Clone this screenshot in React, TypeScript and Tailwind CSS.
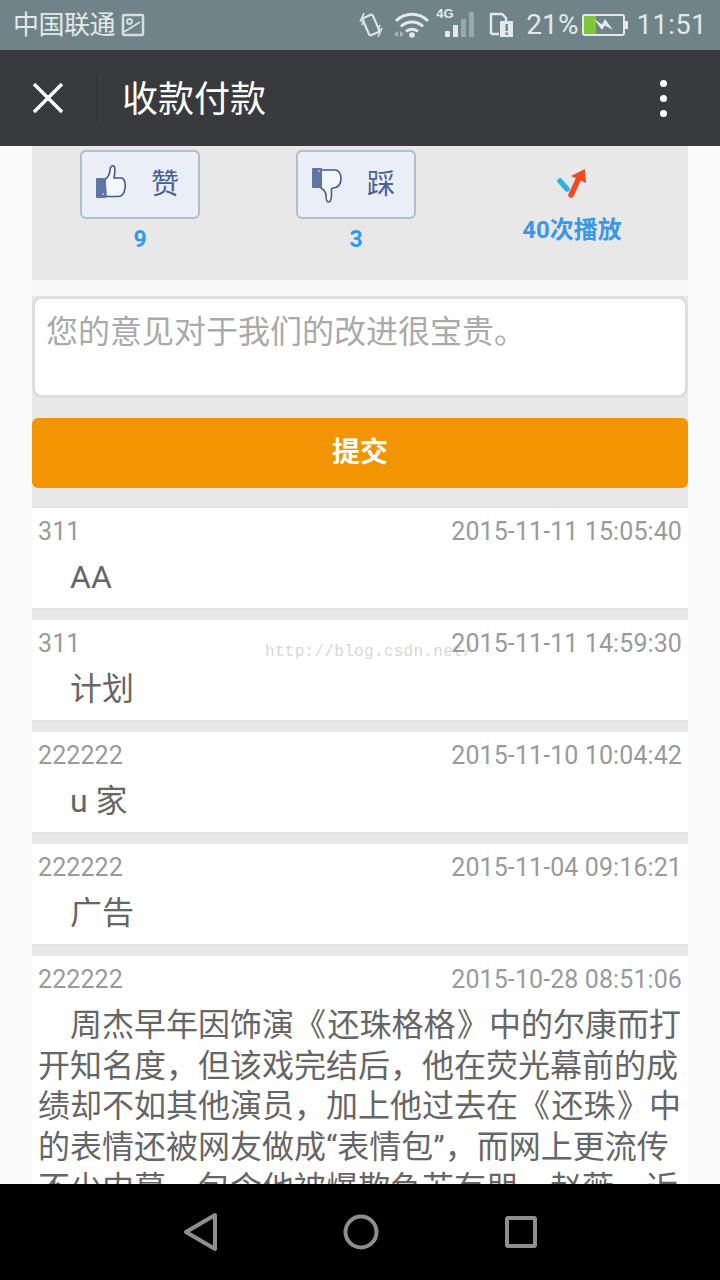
import React from "react";

const FONT = "font-['Roboto','Noto_Sans_CJK_SC',sans-serif]";

function StatusBar() {
  return (
    <div className="h-[50px] shrink-0 bg-[#6f8389] flex items-center pl-[13px] pr-[13px] text-[#e3e9ea]">
      <span className="text-[26px] leading-none tracking-[-0.5px]">中国联通</span>
      <svg width="24" height="24" viewBox="0 0 24 24" className="ml-[6px]" fill="none" stroke="#d6dfe0" strokeWidth="2.5">
        <rect x="2" y="2" width="20" height="20" rx="1" />
        <circle cx="8.500" cy="8.500" r="2.400" strokeWidth="2" />
        <path d="M3 19 L19 9" strokeWidth="2" />
      </svg>
      <div className="flex-1" />
      <svg width="24" height="26" viewBox="0 0 24 26" fill="none" stroke="#dfe6e7" strokeWidth="2.200" className="mr-[11px]">
        <rect x="6.500" y="3.500" width="11" height="19" rx="2" transform="rotate(-24 12 13)" />
        <path d="M1 10 L5 1 M3 13 L5 8 M23 16 L19 25 M21 13 L19 18" strokeWidth="1.600" />
      </svg>
      <svg width="36" height="28" viewBox="0 0 36 28" fill="none" stroke="#e3e9ea" strokeWidth="3" className="mr-[6px]">
        <path d="M2 10 C11 1 25 1 34 10" />
        <path d="M7 15.500 C13 9.500 23 9.500 29 15.500" />
        <path d="M12 20.500 C15 17.500 21 17.500 24 20.500" />
        <circle cx="18" cy="24" r="2.800" fill="#e3e9ea" stroke="none" />
        <path d="M0 23 l4 -3 v6 z M6 20 l4 3 l-4 3 z" fill="#a9b8bb" stroke="none" />
      </svg>
      <div className="relative w-[39px] h-[30px] mr-[14px]">
        <span className="absolute left-0 top-[-3px] text-[13px] font-bold leading-none font-['Liberation_Sans',sans-serif]">4G</span>
        <div className="absolute left-[9px] bottom-[3px] flex items-end gap-[3px]">
          <div className="w-[5px] h-[6px] bg-[#e3e9ea] rounded-[1px]" />
          <div className="w-[5px] h-[12px] bg-[#e3e9ea]" />
          <div className="w-[5px] h-[18px] bg-[#98a9ad]" />
          <div className="w-[5px] h-[25px] bg-[#98a9ad]" />
        </div>
      </div>
      <svg width="24" height="26" viewBox="0 0 24 26" fill="none" className="mr-[13px]">
        <path d="M2 22 V2 H13 L17 6 V9 M2 22 H10" stroke="#e3e9ea" strokeWidth="2.400" />
        <rect x="11" y="9" width="13" height="16" fill="#e3e9ea" />
        <rect x="16.500" y="12" width="2.400" height="7" fill="#6f8389" />
        <rect x="16.500" y="20.500" width="2.400" height="2.400" fill="#6f8389" />
      </svg>
      <span className="text-[28px] leading-none tracking-[0.2px] mr-[3px]">21%</span>
      <svg width="46" height="22" viewBox="0 0 46 22" fill="none" className="mr-[9px]">
        <rect x="1" y="1" width="41" height="20" rx="2" stroke="#e3e9ea" strokeWidth="2" />
        <rect x="2" y="2" width="12" height="18" fill="#80c43c" />
        <rect x="43" y="7" width="3" height="8" fill="#e3e9ea" />
        <path d="M12 5 L20 10.500 L23 5 L31 16 L23 11.500 L20 16 Z" fill="#e3e9ea" />
      </svg>
      <span className="text-[27px] leading-none tracking-[0.6px]">11:51</span>
    </div>
  );
}

function Header() {
  return (
    <div className="h-[96px] shrink-0 bg-[#393a3e] flex items-center text-white">
      <div className="w-[97px] h-[48px] flex items-center border-r border-[#2f3033]">
        <svg width="32" height="32" viewBox="0 0 32 32" className="ml-[32px]" stroke="#fff" strokeWidth="3.400" fill="none">
          <path d="M2 2 L30 30 M30 2 L2 30" />
        </svg>
      </div>
      <span className="ml-[25px] mt-[3px] text-[36px] leading-none">收款付款</span>
      <div className="flex-1" />
      <div className="flex flex-col gap-[8px] mr-[53px]">
        <div className="w-[7px] h-[7px] rounded-full bg-white" />
        <div className="w-[7px] h-[7px] rounded-full bg-white" />
        <div className="w-[7px] h-[7px] rounded-full bg-white" />
      </div>
    </div>
  );
}

function Vote({ label, count, down }: { label: string; count: string; down?: boolean }) {
  return (
    <div className="flex flex-col items-center">
      <div className="w-[120px] h-[69px] mt-[4px] rounded-[6px] border-[2px] border-[#b0bccf] bg-[#e9eef7] flex items-center pl-[14px] text-[#4a5f96]">
        {down ? (
          <svg width="30" height="36" viewBox="0 0 30 36" fill="none" className="mt-[3px]">
            <path d="M9 2 H24 C28 3 29 7 29 11 C29 16 26 20 21 20 C19 20 19.500 22 19.500 26 C19.500 30 19 34 16.500 34 C14 34 14 30 14 27 C14 24 11 21 9 20 Z" fill="#f4f7fb" stroke="#44598f" strokeWidth="1.600" />
            <rect x="0" y="0" width="10" height="20" rx="1" fill="#5f75a5" />
            <circle cx="7" cy="3" r="0.800" fill="#fff" />
          </svg>
        ) : (
          <svg width="30" height="36" viewBox="0 0 30 36" fill="none" className="mb-[3px]">
            <path d="M9 15 C12 12 14 9 14 5 C14 1 17 -0.500 18.500 2 C19.500 6 18.500 10 18 13 H25 C29 13 29.500 19 29 23 C28.500 28 26 31.500 22 31.500 H10 Z" fill="#f4f7fb" stroke="#44598f" strokeWidth="1.600" />
            <rect x="0" y="13" width="10" height="20" rx="1" fill="#5f75a5" />
            <circle cx="7" cy="29" r="0.800" fill="#fff" />
          </svg>
        )}
        <span className="ml-[25px] text-[28px] leading-none">{label}</span>
      </div>
      <div className="mt-[8px] text-[23px] leading-[26px] font-bold text-[#2f9bf0]">{count}</div>
    </div>
  );
}

function Stats() {
  return (
    <div className="h-[134px] bg-[#e8e8e8] grid grid-cols-[216px_216px_216px] justify-items-center">
      <Vote label="赞" count="9" />
      <Vote label="踩" count="3" down />
      <div className="flex flex-col items-center">
        <svg width="30" height="32" viewBox="0 0 30 32" className="mt-[22px]" fill="none">
          <path d="M3 13 L10 21" stroke="#2db2dc" strokeWidth="5.500" strokeLinecap="round" />
          <path d="M14 27 L22 10" stroke="#ee4b25" strokeWidth="5.500" strokeLinecap="round" />
          <path d="M14 8 L28 1 L29 15 Z" fill="#ee4b25" />
        </svg>
        <div className="mt-[15px] text-[24px] leading-[30px] font-bold text-[#3b97e8]">40次播放</div>
      </div>
    </div>
  );
}

function Entry({ name, time, mark, children }: { name: string; time: string; mark?: string; children: React.ReactNode }) {
  return (
    <div className="relative bg-white">
      {mark && (
        <div className="absolute left-[233px] top-[24px] text-[16px] leading-none tracking-[0.3px] text-[#d8d8d8] font-['Liberation_Mono',monospace]">
          {mark}
        </div>
      )}
      <div className="relative flex justify-between px-[6px] pt-[9px] text-[25px] leading-[30px] tracking-[0.1px] text-[#9a9a9a]">
        <span>{name}</span>
        <span>{time}</span>
      </div>
      {children}
    </div>
  );
}

function Short({ children }: { children: React.ReactNode }) {
  return <div className="pl-[38px] pt-[10px] h-[61px] text-[32px] leading-[40px] text-[#666]">{children}</div>;
}

function Gap() {
  return <div className="h-[12px] bg-[#e8e8e8] border-t-[2px] border-[#dfe5e8]" />;
}

export default function App() {
  return (
    <div className={`w-[720px] h-[1280px] flex flex-col overflow-hidden bg-[#fafafa] ${FONT}`}>
      <StatusBar />
      <Header />
      <main className="flex-1 overflow-hidden px-[32px]">
        <Stats />
        <div className="bg-[#f8f8f8] h-[16px]" />
        <div className="bg-[#e8e8e8] pb-[18px]">
          <textarea
            readOnly
            placeholder="您的意见对于我们的改进很宝贵。"
            className={`block w-full h-[102px] resize-none rounded-[10px] border-[3px] border-[#dedede] bg-white px-[11px] py-[15px] text-[32px] leading-[36px] outline-none placeholder:text-[#aaaaaa] ${FONT}`}
          />
          <div className="mt-[20px] h-[70px] rounded-[6px] bg-[#f39503] flex items-center justify-center text-[28px] font-bold text-white">
            提交
          </div>
        </div>
        <div className="h-[2px] bg-[#dfe5e8]" />
        <Entry name="311" time="2015-11-11 15:05:40"><Short>AA</Short></Entry>
        <Gap />
        <Entry name="311" time="2015-11-11 14:59:30" mark="http://blog.csdn.net/"><Short>计划</Short></Entry>
        <Gap />
        <Entry name="222222" time="2015-11-10 10:04:42"><Short>u 家</Short></Entry>
        <Gap />
        <Entry name="222222" time="2015-11-04 09:16:21"><Short>广告</Short></Entry>
        <Gap />
        <Entry name="222222" time="2015-10-28 08:51:06">
          <div className="px-[6px] pt-[10px] text-[32px] leading-[40.7px] text-[#666] indent-[32px] [word-spacing:-6.5px]">
            周杰早年因饰演《 还珠格格 》中的尔康而打开知名度，但该戏完结后，他在荧光幕前的成绩却不如其他演员，加上他过去在《 还珠 》中的表情还被网友做成“表情包”，而网上更流传不少内幕，包含他被爆欺负苏有朋，赵薇，近
          </div>
        </Entry>
      </main>
      <nav className="h-[96px] shrink-0 bg-black flex items-center justify-center gap-[120px] pl-[2px]">
        <div className="w-[40px] flex justify-center">
          <svg width="36" height="40" viewBox="0 0 36 40" fill="none" stroke="#8e8e8e" strokeWidth="4" strokeLinejoin="round">
            <path d="M32 3 L3 20 L32 37 Z" />
          </svg>
        </div>
        <div className="w-[40px] flex justify-center">
          <svg width="36" height="36" viewBox="0 0 36 36" fill="none" stroke="#8e8e8e" strokeWidth="4">
            <circle cx="18" cy="18" r="15.500" />
          </svg>
        </div>
        <div className="w-[40px] flex justify-center">
          <svg width="32" height="32" viewBox="0 0 32 32" fill="none" stroke="#8e8e8e" strokeWidth="4" strokeLinejoin="round">
            <rect x="2" y="2" width="28" height="28" rx="1" />
          </svg>
        </div>
      </nav>
    </div>
  );
}
